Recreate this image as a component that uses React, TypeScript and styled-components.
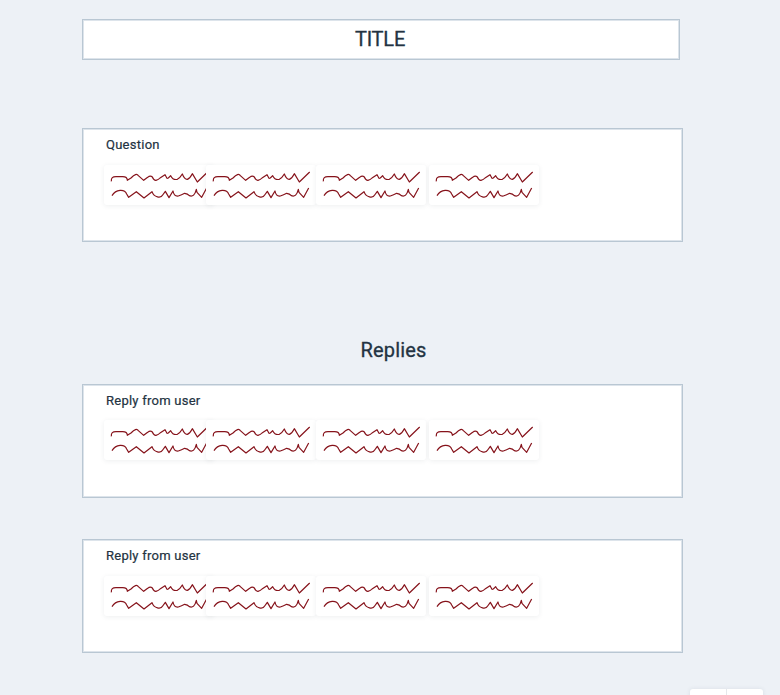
import React from 'react';
import styled, { createGlobalStyle } from 'styled-components';

const GlobalStyle = createGlobalStyle`
  * { box-sizing: border-box; }
  body {
    margin: 0;
    background: #edf1f6;
    color: #233342;
    font-family: Roboto, "Liberation Sans", sans-serif;
  }
`;

const Page = styled.main`
  position: relative;
  display: flex;
  flex-direction: column;
  width: 780px;
  height: 695px;
  padding: 19px 0 0 82px;
  overflow: hidden;
`;

const Panel = styled.section`
  flex: none;
  background: #fff;
  border: 1px solid #b9c7d3;
  box-shadow: inset 0 0 0 1px #dde4eb;
`;

const TitleBar = styled(Panel)`
  display: flex;
  justify-content: center;
  width: 598px;
  height: 41px;
`;

const Title = styled.h1`
  margin: 0 2px 0 0;
  font-size: 20px;
  font-weight: 400;
  line-height: 39px;
  letter-spacing: -0.2px;
  -webkit-text-stroke: 0.3px currentColor;
`;

const RepliesHeading = styled.h2`
  flex: none;
  width: 623px;
  height: 28px;
  margin: 94px 0 20px;
  text-align: center;
  font-size: 20px;
  font-weight: 400;
  line-height: 28px;
  letter-spacing: 0.2px;
  -webkit-text-stroke: 0.3px currentColor;
`;

const Card = styled(Panel)<{ $gap: number; $lift?: number }>`
  width: 601px;
  height: 114px;
  margin-top: ${({ $gap }) => $gap}px;
  padding: 6px 0 0 21px;

  > div { margin-top: ${({ $lift = 0 }) => 10 - $lift}px; }
`;

const CardLabel = styled.h3`
  height: 20px;
  margin: 0 0 0 2px;
  font-size: 13px;
  font-weight: 400;
  line-height: 20px;
  letter-spacing: 0.25px;
  -webkit-text-stroke: 0.2px currentColor;
`;

const TileRow = styled.div`
  display: flex;
`;

const Tile = styled.div<{ $shift: number }>`
  flex: none;
  width: 110px;
  height: 40px;
  margin-left: ${({ $shift }) => $shift}px;
  border-radius: 3px;
  background: #fff;
  box-shadow: 0 1px 5px rgba(35, 45, 60, 0.08);

  svg { display: block; }
`;

const Toolbar = styled.div`
  position: absolute;
  top: 689px;
  left: 690px;
  display: flex;
  width: 73px;
  height: 30px;
  border-radius: 3px;
  background: #fff;
  box-shadow: 0 0 4px rgba(50, 65, 85, 0.1);
`;

const ToolbarSlot = styled.div`
  width: 37px;
  border-right: 1px solid #e5e8eb;
`;

const Squiggle = () => (
  <svg width="110" height="40" viewBox="12 30 330 120" fill="none" stroke="#86131b" strokeWidth="3.6" strokeLinejoin="round">
    <path d="M34 79C33 68 38 65 48 65H68C79 65 82 69 82 76L93 69Q109 52 115 62L131 76L143 67Q151 60 157 66Q162 77 168 76Q176 74 180 69L195 59L201 70L205 69L212 62Q219 76 232 73Q240 69 247 57Q254 74 262 73Q270 70 277 56L292 81L323 51" />
    <path d="M36 122C48 102 74 102 80 117L86 127L109 110L132 129L156 110C162 128 183 130 188 120L196 109L207 128L219 108Q222 125 235 123Q245 120 254 115Q263 116 268 122Q283 128 289 103L291 112L305 127L320 99" />
  </svg>
);

const tileShifts = [0, -8, 0, 3];

const Post = ({ label, gap, lift }: { label: string; gap: number; lift?: number }) => (
  <Card $gap={gap} $lift={lift}>
    <CardLabel>{label}</CardLabel>
    <TileRow>
      {tileShifts.map((shift, i) => (
        <Tile key={i} $shift={shift}><Squiggle /></Tile>
      ))}
    </TileRow>
  </Card>
);

export default function App() {
  return (
    <>
      <GlobalStyle />
      <Page>
        <TitleBar><Title>TITLE</Title></TitleBar>
        <Post label="Question" gap={68} />
        <RepliesHeading>Replies</RepliesHeading>
        <Post label="Reply from user" gap={0} lift={1} />
        <Post label="Reply from user" gap={41} />
        <Toolbar><ToolbarSlot /></Toolbar>
      </Page>
    </>
  );
}
